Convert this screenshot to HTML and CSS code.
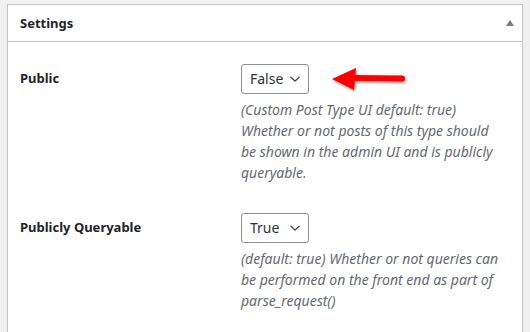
FILE: index.html
```html
<!DOCTYPE html>
<html lang="en">
<head>
    <meta charset="UTF-8">
    <title>Settings</title>
    <link rel="stylesheet" href="styles.css">
</head>
<body>
    <div class="postbox">
        <div class="postbox-header">
            <h2 class="hndle">Settings</h2>
            <span class="toggle-indicator"></span>
        </div>
        <div class="inside">
            <table class="form-table">
                <tr>
                    <th><label for="public">Public</label></th>
                    <td>
                        <select id="public">
                            <option>True</option>
                            <option selected>False</option>
                        </select>
                        <p class="description">(Custom Post Type UI default: true) Whether or not posts of this type should be shown in the admin UI and is publicly queryable.</p>
                    </td>
                </tr>
                <tr>
                    <th><label for="publicly_queryable">Publicly Queryable</label></th>
                    <td>
                        <select id="publicly_queryable">
                            <option selected>True</option>
                            <option>False</option>
                        </select>
                        <p class="description">(default: true) Whether or not queries can be performed on the front end as part of parse_request()</p>
                    </td>
                </tr>
            </table>
        </div>
    </div>

    <svg class="annotation" width="84" height="34" viewBox="0 0 84 34">
        <defs>
            <filter id="shadow" x="-20%" y="-40%" width="140%" height="180%">
                <feDropShadow dx="1" dy="1.5" stdDeviation="1.2" flood-color="#000" flood-opacity="0.45"/>
            </filter>
        </defs>
        <g filter="url(#shadow)" fill="#ff0000">
            <polygon points="4,17 28,6 26,28"/>
            <line x1="24" y1="16" x2="74" y2="16.5" stroke="#ff0000" stroke-width="6" stroke-linecap="round"/>
        </g>
    </svg>
</body>
</html>
```

FILE: styles.css
```css
html, body {
    height: 332px;
    overflow: hidden;
}
body {
    margin: 0;
    padding: 4px 7px 0;
    background-color: #f0f0f1;
    font-family: "Noto Sans", "Open Sans", sans-serif;
    color: #1d2327;
    font-size: 13px;
    box-sizing: border-box;
}
.postbox {
    background-color: #fff;
    border: 1px solid #c3c4c7;
    width: 514px;
    height: 360px;
}
.postbox-header {
    display: flex;
    align-items: center;
    justify-content: space-between;
    border-bottom: 1px solid #c3c4c7;
    padding: 0 8px 0 12px;
    height: 36px;
}
.hndle {
    margin: 0;
    font-size: 13px;
    font-weight: 700;
    line-height: 1.4;
}
.toggle-indicator {
    width: 0;
    height: 0;
    border-left: 4px solid transparent;
    border-right: 4px solid transparent;
    border-bottom: 6px solid #787c82;
}
.inside {
    padding: 0 12px;
}
.form-table {
    border-collapse: collapse;
    table-layout: fixed;
    margin-top: 7px;
    width: 100%;
}
.form-table th {
    width: 211px;
    padding: 20px 10px 20px 0;
    text-align: left;
    vertical-align: top;
    font-size: 13px;
    font-weight: 700;
    line-height: 1.4;
}
.form-table td {
    padding: 15px 10px 15px 0;
    vertical-align: top;
    line-height: 1.3;
}
select {
    font-family: inherit;
    font-size: 14px;
    color: #2c3338;
    border: 1px solid #8c8f94;
    border-radius: 3px;
    height: 30px;
    line-height: 28px;
    padding: 0 24px 0 8px;
    background: #fff url('data:image/svg+xml;utf8,<svg xmlns="http://www.w3.org/2000/svg" width="12" height="8" viewBox="0 0 12 8"><path d="M1.5 1.8l4.5 4.4 4.5-4.4" fill="none" stroke="%23444" stroke-width="1.3"/></svg>') no-repeat right 7px top 50%;
    background-size: 12px 8px;
    appearance: none;
    -webkit-appearance: none;
    vertical-align: middle;
}
.description {
    margin: 5px 0 0;
    color: #646970;
    font-style: italic;
    font-size: 14px;
    line-height: 1.5;
    max-width: 264px;
}
.annotation {
    position: absolute;
    left: 328px;
    top: 62px;
}
```
